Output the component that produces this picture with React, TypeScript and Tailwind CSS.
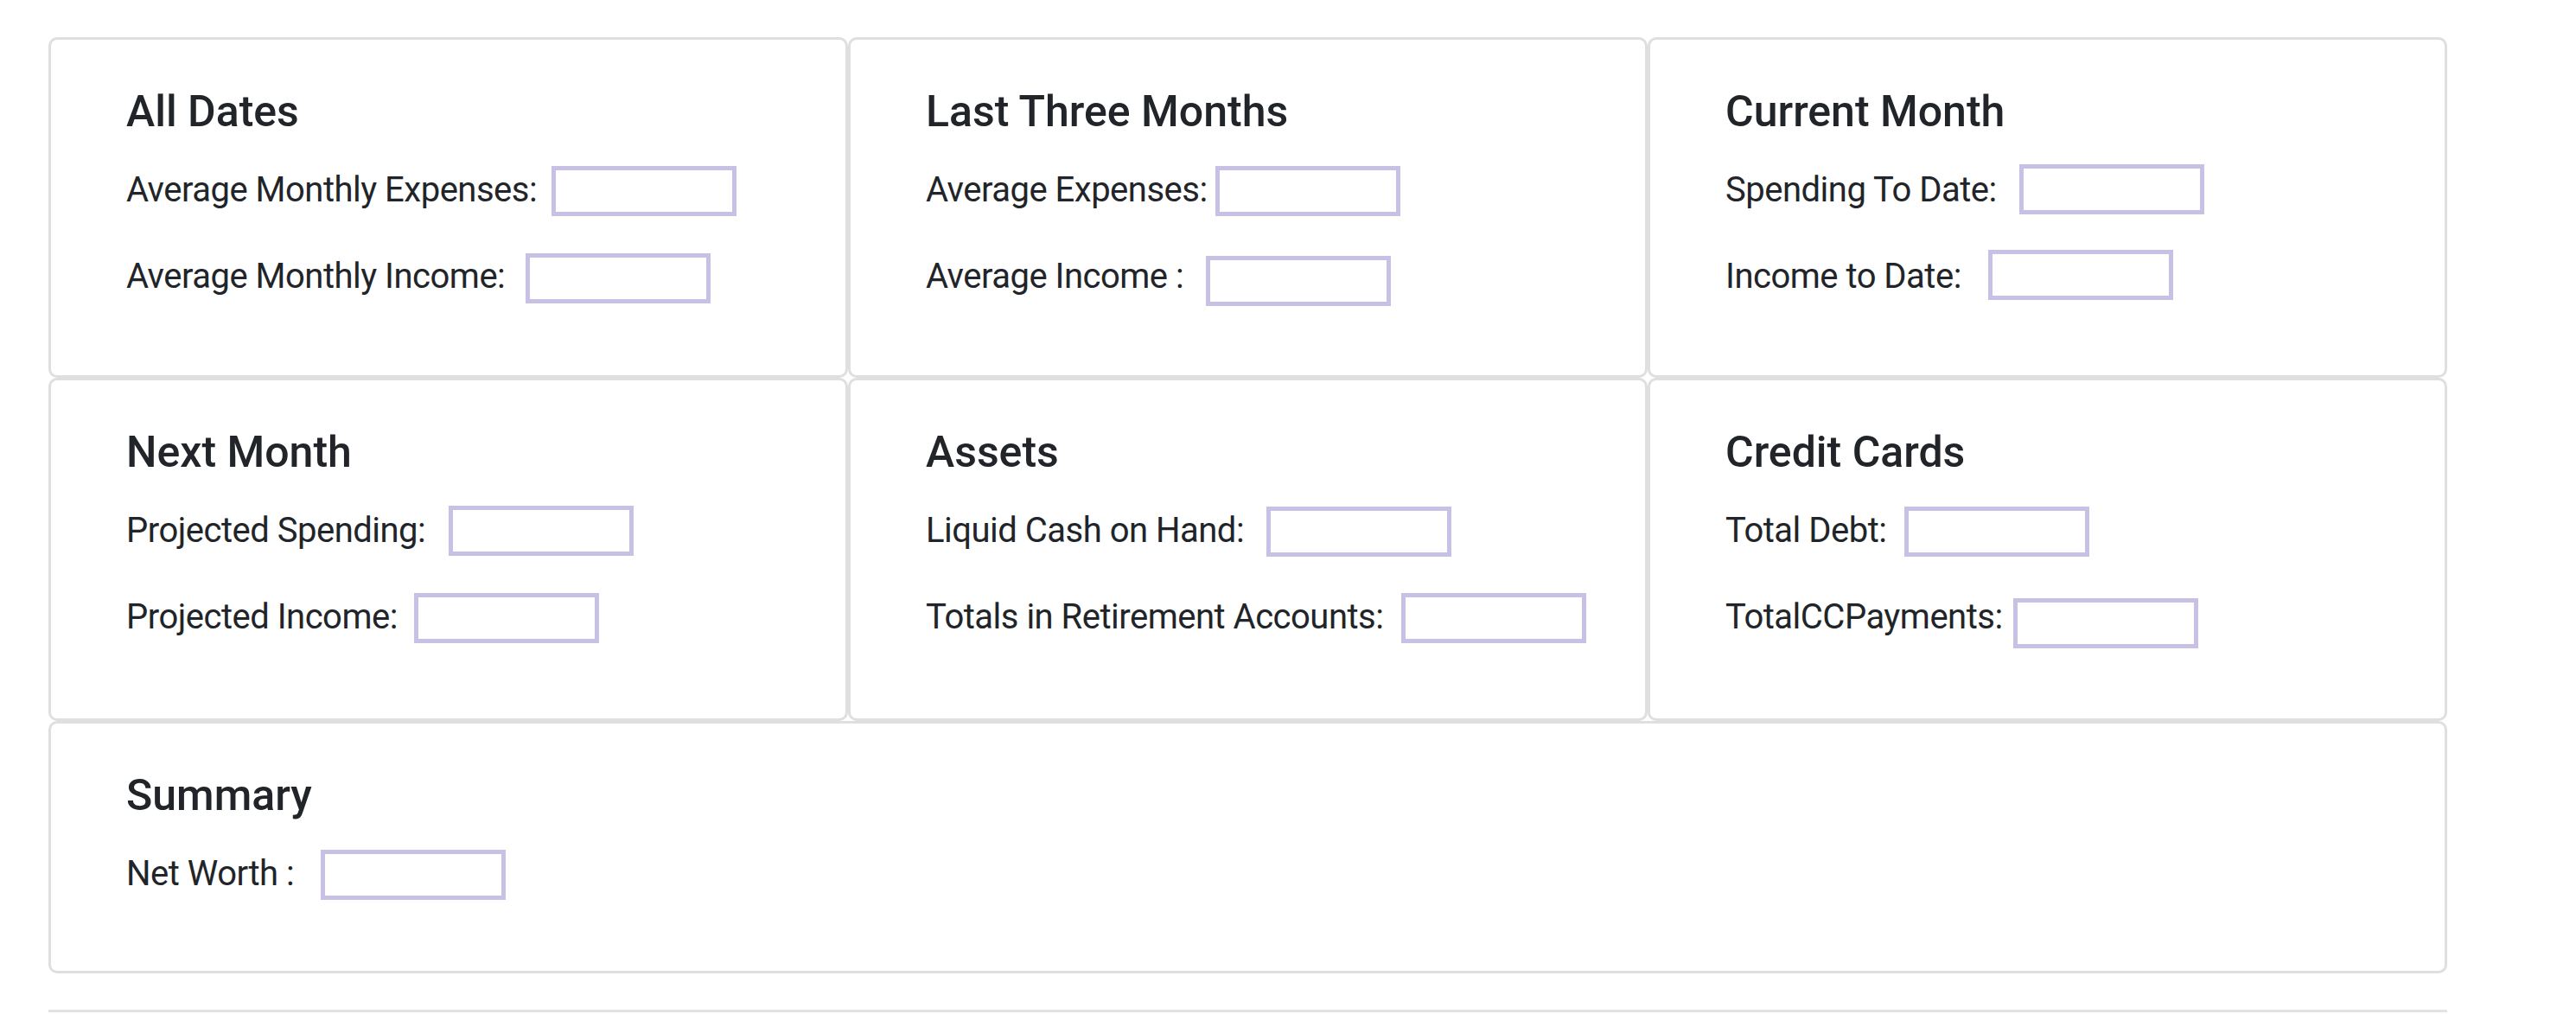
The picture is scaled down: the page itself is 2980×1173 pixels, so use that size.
import React from "react";

type Row = { label: string; labelCls: string; inputCls: string };
type Card = { title: string; rows: Row[] };

const topCards: Card[] = [
  {
    title: "All Dates",
    rows: [
      { label: "Average Monthly Expenses:", labelCls: "w-[492px]", inputCls: "mt-[4px]" },
      { label: "Average Monthly Income:", labelCls: "w-[462px]", inputCls: "mt-[5px]" },
    ],
  },
  {
    title: "Last Three Months",
    rows: [
      { label: "Average Expenses:", labelCls: "w-[335px]", inputCls: "mt-[4px]" },
      { label: "Average Income :", labelCls: "w-[324px]", inputCls: "mt-[8px]" },
    ],
  },
  {
    title: "Current Month",
    rows: [
      { label: "Spending To Date:", labelCls: "w-[340px]", inputCls: "mt-[2px]" },
      { label: "Income to Date:", labelCls: "w-[304px]", inputCls: "mt-[1px]" },
    ],
  },
];

const midCards: Card[] = [
  {
    title: "Next Month",
    rows: [
      { label: "Projected Spending:", labelCls: "w-[373px]", inputCls: "mt-[3px]" },
      { label: "Projected Income:", labelCls: "w-[333px]", inputCls: "mt-[4px]" },
    ],
  },
  {
    title: "Assets",
    rows: [
      { label: "Liquid Cash on Hand:", labelCls: "w-[394px]", inputCls: "mt-[4px]" },
      { label: "Totals in Retirement Accounts:", labelCls: "w-[550px]", inputCls: "mt-[4px]" },
    ],
  },
  {
    title: "Credit Cards",
    rows: [
      { label: "Total Debt:", labelCls: "w-[207px]", inputCls: "mt-[4px]" },
      { label: "TotalCCPayments:", labelCls: "w-[333px]", inputCls: "mt-[10px]" },
    ],
  },
];

function FieldRow({ row }: { row: Row }) {
  return (
    <div className="flex items-start h-[60px]">
      <label className={`shrink-0 mt-[2px] whitespace-nowrap text-[40px] leading-[60px] tracking-[-0.5px] ${row.labelCls}`}>
        {row.label}
      </label>
      <input
        type="text"
        className={`shrink-0 w-[214px] h-[58px] border-[5px] border-[#c9c0e5] bg-white outline-none ${row.inputCls}`}
      />
    </div>
  );
}

function CardBox({ card, cls }: { card: Card; cls: string }) {
  return (
    <div className={`border-[3px] border-[#dfdfdf] rounded-[10px] bg-white pt-[53px] px-[87px] ${cls}`}>
      <h4 className="text-[50px] leading-[60px] font-medium mb-[29px] whitespace-nowrap">{card.title}</h4>
      <div className="flex flex-col gap-[40px]">
        {card.rows.map((r) => (
          <FieldRow key={r.label} row={r} />
        ))}
      </div>
    </div>
  );
}

export default function App() {
  return (
    <div className="min-h-[1173px] bg-white text-[#212529]" style={{ fontFamily: "Roboto, 'Liberation Sans', sans-serif" }}>
      <div className="ml-[56px] w-[2775px] pt-[43px]">
        <div className="grid grid-cols-3">
          {topCards.map((c) => (
            <CardBox key={c.title} card={c} cls="pb-[86px]" />
          ))}
        </div>
        <div className="grid grid-cols-3">
          {midCards.map((c) => (
            <CardBox key={c.title} card={c} cls="pb-[89px]" />
          ))}
        </div>
        <CardBox
          card={{
            title: "Summary",
            rows: [{ label: "Net Worth :", labelCls: "w-[225px]", inputCls: "mt-[4px]" }],
          }}
          cls="pb-[84px]"
        />
        <hr className="mt-[42px] border-0 border-t-[3px] border-[#e3e3e3]" />
      </div>
    </div>
  );
}
